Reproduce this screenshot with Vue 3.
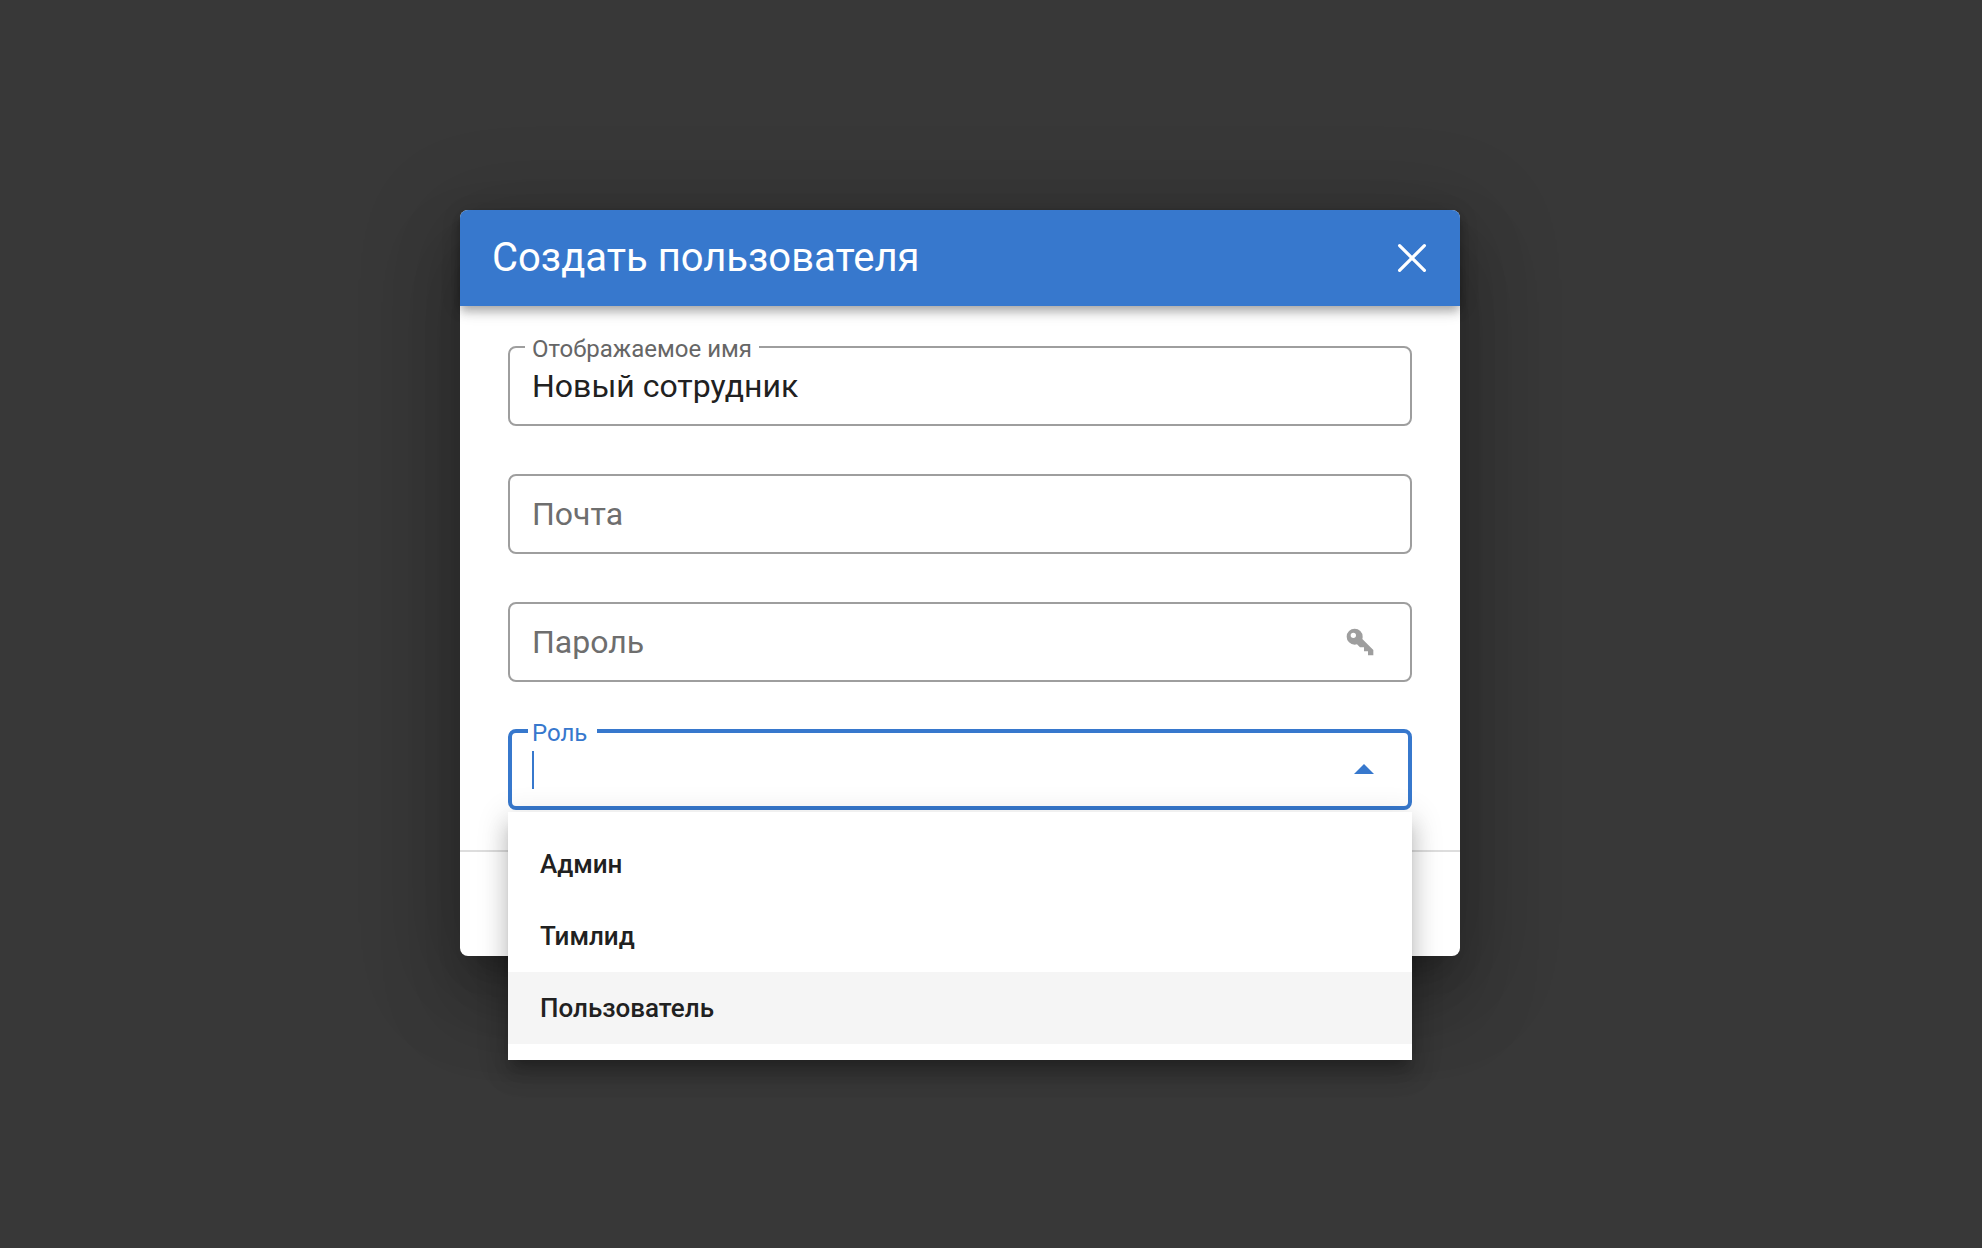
<template>
  <div class="page">
    <div class="dialog">
      <header class="dialog-header">
        <h2 class="dialog-title">Создать пользователя</h2>
        <svg class="close-icon" viewBox="0 0 24 24">
          <path d="M5.8,5.8L18.2,18.2M18.2,5.8L5.8,18.2" />
        </svg>
      </header>

      <div class="dialog-body">
        <div class="field">
          <span class="field-label">Отображаемое имя</span>
          <span class="field-value">Новый сотрудник</span>
        </div>

        <div class="field">
          <span class="field-placeholder">Почта</span>
        </div>

        <div class="field">
          <span class="field-placeholder">Пароль</span>
          <svg class="key-icon" viewBox="0 0 24 24">
            <path d="M22,18V22H18V19H15V16H12L9.74,13.74C9.19,13.91 8.61,14 8,14A6,6 0 0,1 2,8A6,6 0 0,1 8,2A6,6 0 0,1 14,8C14,8.61 13.91,9.19 13.74,9.74L22,18M7,5A2,2 0 0,0 5,7A2,2 0 0,0 7,9A2,2 0 0,0 9,7A2,2 0 0,0 7,5Z" />
          </svg>
        </div>

        <div class="field field-focused">
          <span class="field-label">Роль</span>
          <span class="caret"></span>
          <svg class="arrow-icon" viewBox="0 0 24 24">
            <path d="M7,15L12,10L17,15H7Z" />
          </svg>

          <div class="menu">
            <div
              v-for="role in roles"
              :key="role"
              class="menu-item"
              :class="{ 'menu-item-active': role === activeRole }"
            >
              {{ role }}
            </div>
          </div>
        </div>
      </div>

      <footer class="dialog-footer"></footer>
    </div>
  </div>
</template>

<script setup>
const roles = ['Админ', 'Тимлид', 'Пользователь']
const activeRole = 'Пользователь'
</script>

<style>
html,
body {
  margin: 0;
  background: #383838;
}
</style>

<style scoped>
.page {
  box-sizing: border-box;
  width: 1982px;
  height: 1248px;
  padding: 210px 0 0 460px;
  background: #383838;
  font-family: Roboto, sans-serif;
  overflow: hidden;
}

.dialog {
  display: flex;
  flex-direction: column;
  width: 1000px;
  height: 746px;
  background: #fff;
  border-radius: 8px;
  box-shadow: 0 22px 30px -14px rgba(0, 0, 0, 0.24), 0 48px 76px 6px rgba(0, 0, 0, 0.18), 0 18px 92px 16px rgba(0, 0, 0, 0.16);
}

.dialog-header {
  display: flex;
  align-items: center;
  justify-content: space-between;
  box-sizing: border-box;
  height: 96px;
  flex-shrink: 0;
  padding: 0 24px 0 32px;
  background: #3778cd;
  border-radius: 8px 8px 0 0;
  box-shadow: 0 4px 8px -2px rgba(0, 0, 0, 0.2), 0 8px 10px 0 rgba(0, 0, 0, 0.14), 0 2px 20px 0 rgba(0, 0, 0, 0.12);
  position: relative;
}

.dialog-title {
  margin: 0 0 2px;
  color: #fff;
  font-size: 40px;
  font-weight: 400;
}

.close-icon {
  width: 48px;
  height: 48px;
  fill: none;
  stroke: #fff;
  stroke-width: 1.6;
  stroke-linecap: round;
}

.dialog-body {
  display: flex;
  flex-direction: column;
  gap: 48px;
  padding: 40px 48px 40px;
}

.field {
  position: relative;
  display: flex;
  align-items: center;
  justify-content: space-between;
  box-sizing: border-box;
  height: 80px;
  padding: 0 34px 0 22px;
  border: 2px solid #9e9e9e;
  border-radius: 8px;
}

.field-label {
  position: absolute;
  top: -13px;
  left: 15px;
  padding: 0 7px;
  background: #fff;
  color: #666;
  font-size: 24px;
  line-height: 28px;
}

.field-value {
  color: #212121;
  font-size: 32px;
}

.field-placeholder {
  color: #6e6e6e;
  font-size: 32px;
}

.key-icon {
  width: 32px;
  height: 32px;
  fill: #9e9e9e;
}

.field-focused {
  height: 81px;
  margin-top: -1px;
  padding: 0 20px;
  border: 4px solid #3778cd;
}

.field-focused .field-label {
  top: -14px;
  left: 16px;
  padding: 0 10px 0 4px;
  color: #3778cd;
}

.caret {
  width: 2px;
  height: 38px;
  background: #3778cd;
}

.arrow-icon {
  width: 48px;
  height: 48px;
  margin-top: -3px;
  fill: #3778cd;
}

.menu {
  position: absolute;
  top: 79px;
  left: -4px;
  right: -4px;
  padding: 16px 0;
  background: #fff;
  box-shadow: 0 10px 10px -6px rgba(0, 0, 0, 0.2), 0 16px 20px 2px rgba(0, 0, 0, 0.14), 0 6px 28px 4px rgba(0, 0, 0, 0.12);
}

.menu-item {
  display: flex;
  align-items: center;
  height: 72px;
  padding: 0 32px;
  color: #212121;
  font-size: 26px;
  font-weight: 500;
}

.menu-item-active {
  background: #f5f5f5;
}

.dialog-footer {
  flex: 1;
  border-top: 2px solid #ddd;
}
</style>
